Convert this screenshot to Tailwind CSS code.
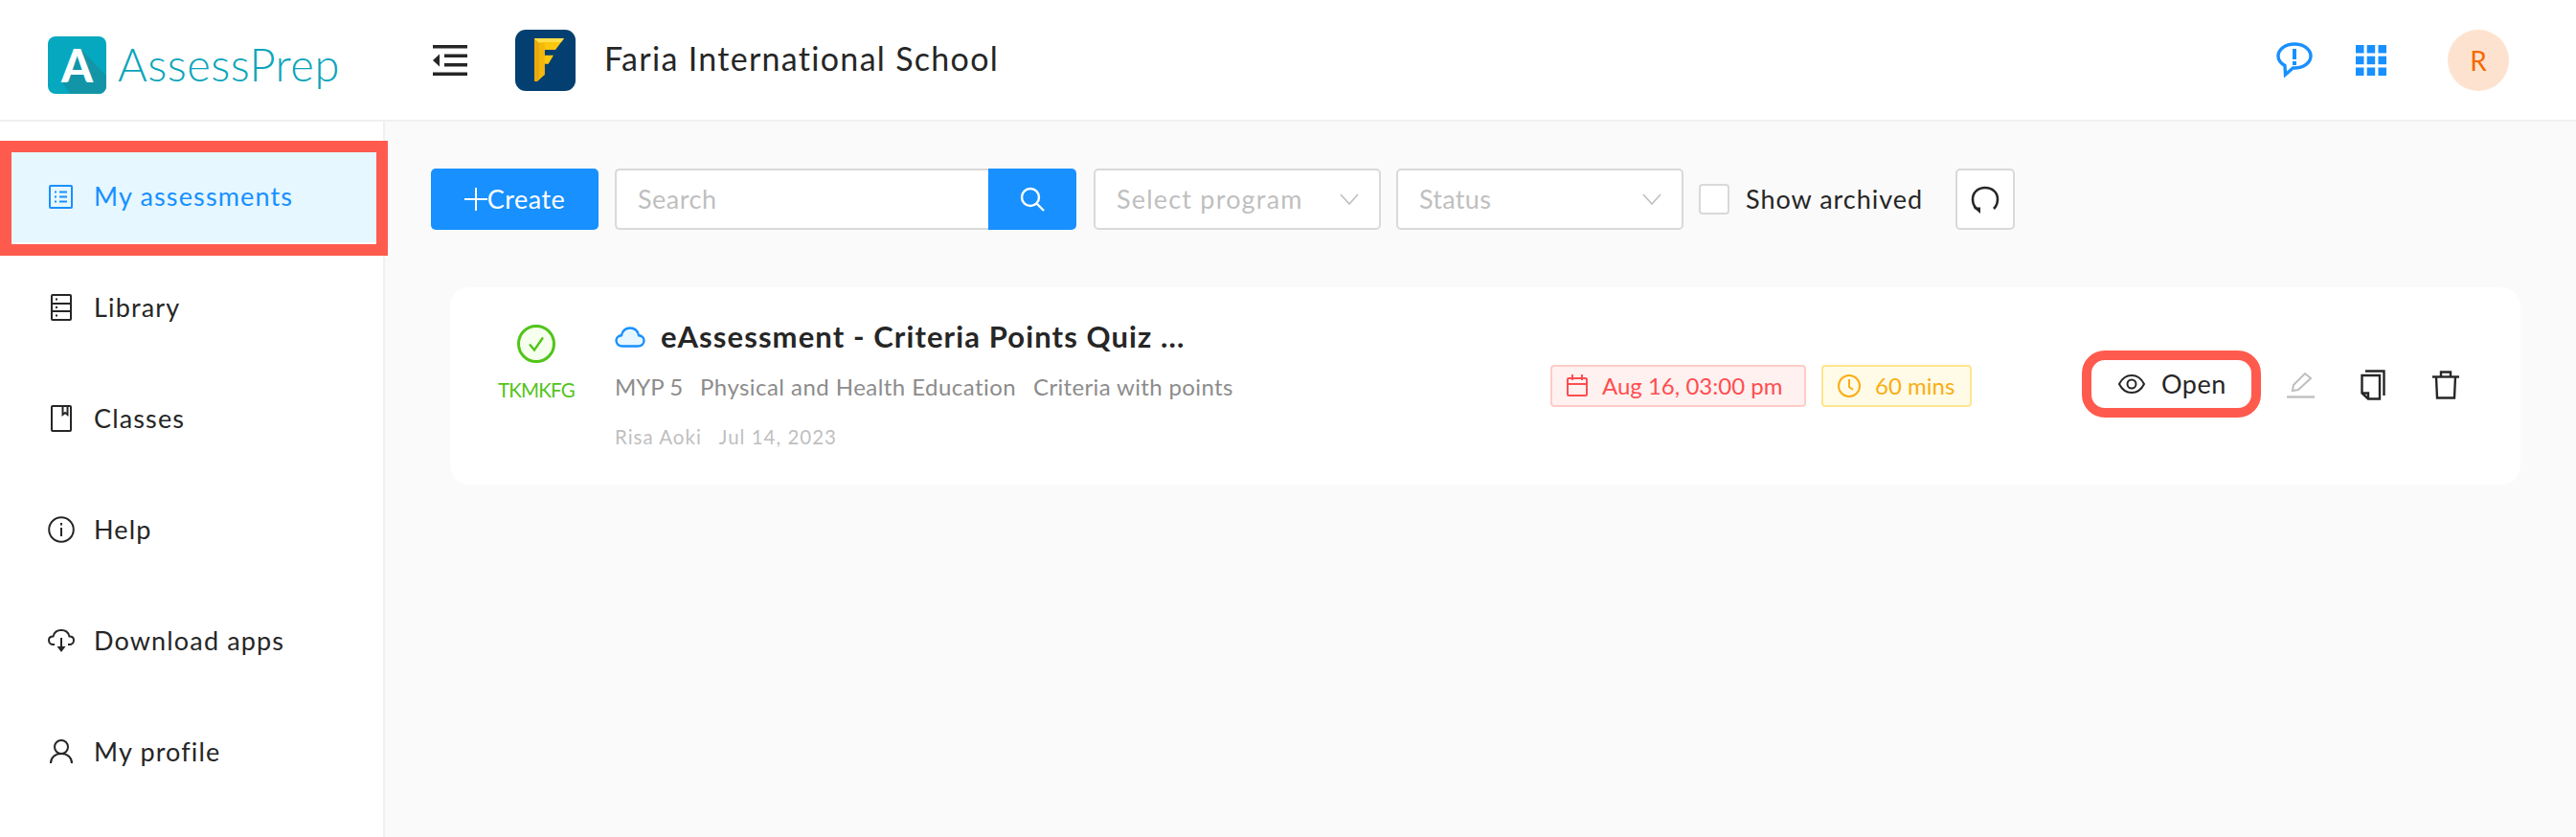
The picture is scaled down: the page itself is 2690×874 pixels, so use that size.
<!DOCTYPE html>
<html lang="en">
<head>
    <meta charset="UTF-8">
    <script src="https://cdn.jsdelivr.net/npm/@tailwindcss/browser@4"></script>
    <title>AssessPrep</title>
</head>
<body class="bg-white font-['Lato','Noto_Sans',sans-serif] text-[#262626]">
<div class="h-[874px] w-[2690px] overflow-hidden flex flex-col">
    <!-- header -->
    <header class="h-[127px] shrink-0 flex items-center border-b-2 border-[#f0f0f0] bg-white">
        <div class="w-[452px] shrink-0 pl-[50px] flex items-center gap-[12px] pt-[10px]">
            <svg class="w-[61px] h-[60px] shrink-0" viewBox="0 0 61 60">
                <rect width="61" height="60" rx="8" fill="#06a8bf"/>
                <path d="M35 14L61 41V52a8 8 0 0 1-8 8H23L15 48z" fill="#1395a8"/>
                <text x="30.500" y="48" text-anchor="middle" font-family="Lato" font-weight="900" font-size="47" fill="#fff">A</text>
            </svg>
            <span class="text-[47px] font-light tracking-[0.5px] leading-none text-[#0ba5ba]">AssessPrep</span>
        </div>
        <svg class="w-[36px] h-[32px] shrink-0" viewBox="0 0 36 32" fill="#262626">
            <rect width="36" height="3.5"/>
            <rect x="12" y="9.5" width="24" height="3.5"/>
            <rect x="12" y="19" width="24" height="3.5"/>
            <rect y="28.500" width="36" height="3.5"/>
            <path d="M0 16l7-6.500v13z"/>
        </svg>
        <div class="ml-[50px] w-[63px] h-[64px] rounded-[11px] bg-[#033f70] flex items-center justify-center shrink-0">
            <svg class="ml-[7px] w-[31px] h-[45px]" viewBox="0 0 31 45">
                <path d="M0 0H31L22 12H10.700V17.700H20L14.700 26.700H10.700V38L3 45H0Z" fill="#fdc60f"/>
                <path d="M0 0L5 5V42L3 45H0Z" fill="#e8a90c"/>
                <path d="M5 5H10.700V38L5 42Z" fill="#f5b70e"/>
                <path d="M0 0H31L28 4H4Z" fill="#ffe04a"/>
            </svg>
        </div>
        <span class="ml-[30px] mb-[3px] text-[34px] leading-none text-[#262626] tracking-[1.300px]">Faria International School</span>
        <div class="ml-auto flex items-center">
            <svg class="w-[38px] h-[38px]" viewBox="0 0 38 38">
                <path d="M19 2C9.500 2 2 7.500 2 14.500C2 18.500 4.500 22 9 24.500L9.500 34L17.500 27H19C28.500 27 36 21.500 36 14.500S28.500 2 19 2Z" fill="none" stroke="#1890ff" stroke-width="3.400"/>
                <rect x="17" y="7" width="4" height="11" fill="#1890ff"/>
                <rect x="17" y="20" width="4" height="4" fill="#1890ff"/>
            </svg>
            <svg class="ml-[45px] w-[32px] h-[32px]" viewBox="0 0 32 32" fill="#1890ff">
                <rect width="8.500" height="8.500"/><rect x="11.700" width="8.500" height="8.500"/><rect x="23.500" width="8.500" height="8.500"/>
                <rect y="11.700" width="8.500" height="8.500"/><rect x="11.700" y="11.700" width="8.500" height="8.500"/><rect x="23.500" y="11.700" width="8.500" height="8.500"/>
                <rect y="23.500" width="8.500" height="8.500"/><rect x="11.700" y="23.500" width="8.500" height="8.500"/><rect x="23.500" y="23.500" width="8.500" height="8.500"/>
            </svg>
            <div class="ml-[64px] mr-[70px] w-[64px] h-[64px] rounded-full bg-[#fde3cf] text-[#f56a00] text-[28px] flex items-center justify-center">R</div>
        </div>
    </header>

    <div class="flex-1 flex min-h-0">
        <!-- sidebar -->
        <aside class="w-[402px] shrink-0 border-r-2 border-[#f0f0f0] bg-white pt-[30px] text-[27px] tracking-[1.150px]">
            <nav class="flex flex-col gap-[20px]">
                <a class="relative h-[96px] flex items-center pl-[51px] gap-[22px] bg-[#e6f7ff] text-[#1890ff]">
                    <svg class="w-[25px] h-[25px] shrink-0" viewBox="0 0 25 25" fill="none" stroke="#1890ff" stroke-width="2">
                        <rect x="1" y="1" width="23" height="23" rx="1"/>
                        <path d="M11 7.500h8M11 12.500h8M11 17.500h8M6 7.500h2M6 12.500h2M6 17.500h2"/>
                    </svg>
                    My assessments
                    <span class="absolute left-0 -top-[10px] w-[405px] h-[120px] border-[12px] border-[#ff5a4e]"></span>
                </a>
                <a class="h-[96px] flex items-center pl-[53px] gap-[23px]">
                    <svg class="w-[22px] h-[28px] shrink-0" viewBox="0 0 22 28" fill="none" stroke="#262626" stroke-width="2">
                        <rect x="1" y="1" width="20" height="26" rx="1"/>
                        <path d="M1 10h20M1 18h20"/>
                        <path d="M5 5.500h2M5 14h2M5 22.500h2"/>
                    </svg>
                    Library
                </a>
                <a class="h-[96px] flex items-center pl-[53px] gap-[23px]">
                    <svg class="w-[22px] h-[28px] shrink-0" viewBox="0 0 22 28" fill="none" stroke="#262626" stroke-width="2">
                        <rect x="1" y="1" width="20" height="26" rx="1"/>
                        <path d="M12.500 1v9l2.500-2 2.500 2V1"/>
                    </svg>
                    Classes
                </a>
                <a class="h-[96px] flex items-center pl-[50px] gap-[20px]">
                    <svg class="w-[28px] h-[28px] shrink-0" viewBox="0 0 28 28" fill="none" stroke="#262626" stroke-width="2">
                        <circle cx="14" cy="14" r="12.800"/>
                        <path d="M14 12v9M14 7v2.500"/>
                    </svg>
                    Help
                </a>
                <a class="h-[96px] flex items-center pl-[50px] gap-[20px]">
                    <svg class="w-[28px] h-[24px] shrink-0" viewBox="0 0 28 24" fill="none" stroke="#262626" stroke-width="2">
                        <path d="M7 16H5.500C3 16 1 14 1 11.500S3 7.500 5.500 7.500C6.500 3.500 10 1 14 1S21.500 3.500 22.500 7.500C25 7.500 27 9 27 11.500S25 16 22.500 16H21"/>
                        <path d="M14 9v12"/>
                        <path d="M9.500 18h9L14 24z" fill="#262626" stroke="none"/>
                    </svg>
                    Download apps
                </a>
                <a class="h-[96px] flex items-center pl-[52px] gap-[22px]">
                    <svg class="w-[24px] h-[26px] shrink-0" viewBox="0 0 24 26" fill="none" stroke="#262626" stroke-width="2">
                        <circle cx="12" cy="8" r="7"/>
                        <path d="M1 25c0-6 4.500-10 11-10s11 4 11 10"/>
                    </svg>
                    My profile
                </a>
            </nav>
        </aside>

        <!-- content -->
        <main class="flex-1 bg-[#fafafa] pt-[49px] pl-[48px] pr-[58px]">
            <div class="flex items-center h-[64px] text-[27px]">
                <button class="w-[175px] h-[64px] rounded-[5px] bg-[#1890ff] text-white tracking-[0.500px] flex items-center justify-center">
                    <svg class="w-[24px] h-[24px]" viewBox="0 0 24 24" stroke="#fff" stroke-width="2"><path d="M12 0v24M0 12h24"/></svg>
                    Create
                </button>
                <div class="ml-[17px] flex h-[64px]">
                    <div class="w-[390px] bg-white border-2 border-r-0 border-[#d9d9d9] rounded-l-[5px] pl-[22px] flex items-center text-[#bfbfbf] tracking-[0.500px]">Search</div>
                    <div class="w-[92px] bg-[#1890ff] rounded-r-[5px] flex items-center justify-center">
                        <svg class="w-[26px] h-[26px]" viewBox="0 0 26 26" fill="none" stroke="#fff" stroke-width="2.400">
                            <circle cx="11" cy="11" r="9"/>
                            <path d="M17.500 17.500L25 25"/>
                        </svg>
                    </div>
                </div>
                <div class="ml-[18px] w-[300px] h-[64px] bg-white border-2 border-[#d9d9d9] rounded-[5px] pl-[22px] pr-[21px] flex items-center justify-between text-[#bfbfbf] tracking-[1.200px]">
                    Select program
                    <svg class="w-[20px] h-[12px]" viewBox="0 0 20 12" fill="none" stroke="#bfbfbf" stroke-width="1.600"><path d="M1 1l9 10 9-10"/></svg>
                </div>
                <div class="ml-[16px] w-[300px] h-[64px] bg-white border-2 border-[#d9d9d9] rounded-[5px] pl-[22px] pr-[21px] flex items-center justify-between text-[#bfbfbf] tracking-[0.300px]">
                    Status
                    <svg class="w-[20px] h-[12px]" viewBox="0 0 20 12" fill="none" stroke="#bfbfbf" stroke-width="1.600"><path d="M1 1l9 10 9-10"/></svg>
                </div>
                <div class="ml-[16px] w-[32px] h-[32px] bg-white border-2 border-[#d9d9d9] rounded-[4px]"></div>
                <span class="ml-[17px] tracking-[1px]">Show archived</span>
                <div class="ml-[34px] w-[62px] h-[64px] bg-white border-2 border-[#d9d9d9] rounded-[5px] flex items-center justify-center">
                    <svg class="w-[30px] h-[30px]" viewBox="0 0 30 30" fill="none" stroke="#262626" stroke-width="2.600">
                        <path d="M6 25C3.500 22.500 2 19 2 15C2 8 7.500 3 15 3S28 8 28 15C28 19 26.500 22.500 24 25"/>
                        <path d="M2.500 23.500h7.500v6.500z" fill="#262626" stroke="none"/>
                    </svg>
                </div>
            </div>

            <!-- assessment card -->
            <div class="ml-[20px] mt-[60px] h-[206px] rounded-[20px] bg-white flex items-center">
                <div class="self-start mt-[39px] ml-[40px] w-[100px] shrink-0 flex flex-col items-center">
                    <svg class="w-[40px] h-[40px]" viewBox="0 0 40 40">
                        <circle cx="20" cy="20" r="18.500" fill="#f6ffed" stroke="#52c41a" stroke-width="3"/>
                        <path d="M13 20.500l5 6 9-13" fill="none" stroke="#52c41a" stroke-width="2.400"/>
                    </svg>
                    <span class="mt-[14px] text-[20.500px] leading-[28px] tracking-[-0.800px] text-[#52c41a]">TKMKFG</span>
                </div>
                <div class="ml-[32px] w-[977px] shrink-0 -mt-[3px]">
                    <div class="h-[40px] flex items-center gap-[16px]">
                        <svg class="w-[32px] h-[22px] shrink-0" viewBox="0 0 32 22">
                            <path d="M8 20.500C4 20.500 1.500 18 1.500 14.500C1.500 11.500 4 9.500 7 9.200C8 4.500 11.500 1.500 16 1.500S24 4.500 25 9.200C28 9.500 30.500 11.500 30.500 14.500C30.500 18 28 20.500 24 20.500Z" fill="#e6f7ff" stroke="#1890ff" stroke-width="2.400"/>
                        </svg>
                        <span class="text-[31px] font-bold leading-none tracking-[1.100px]">eAssessment - Criteria Points Quiz ...</span>
                    </div>
                    <div class="mt-[12px] h-[40px] flex items-center gap-[18px] text-[24px] text-[#8c8c8c]">
                        <span>MYP 5</span>
                        <span class="tracking-[0.450px]">Physical and Health Education</span>
                        <span class="tracking-[0.350px]">Criteria with points</span>
                    </div>
                    <div class="mt-[18px] h-[30px] flex items-center gap-[18px] text-[20.500px] text-[#bfbfbf] tracking-[1px]">
                        <span>Risa Aoki</span>
                        <span>Jul 14, 2023</span>
                    </div>
                </div>
                <div class="h-[44px] w-[267px] shrink-0 rounded-[4px] border-2 border-[#ffccc7] bg-[#fff1f0] text-[#ff4d4f] text-[24px] flex items-center pl-[15px] gap-[15px]">
                    <svg class="w-[22px] h-[24px] shrink-0" viewBox="0 0 22 24" fill="none" stroke="#ff4d4f" stroke-width="2">
                        <rect x="1" y="4" width="20" height="18" rx="1"/>
                        <path d="M1 10h20M6 0v6M16 0v6"/>
                    </svg>
                    Aug 16, 03:00 pm
                </div>
                <div class="ml-[16px] h-[44px] w-[157px] shrink-0 rounded-[4px] border-2 border-[#ffe58f] bg-[#fffbe6] text-[#faad14] text-[24px] flex items-center pl-[15px] gap-[15px]">
                    <svg class="w-[24px] h-[24px] shrink-0" viewBox="0 0 24 24" fill="none" stroke="#faad14" stroke-width="2">
                        <circle cx="12" cy="12" r="11"/>
                        <path d="M12 5v8l4 3"/>
                    </svg>
                    60 mins
                </div>
                <button class="relative ml-[125px] mb-[4px] w-[167px] h-[50px] shrink-0 flex items-center pl-[28px] gap-[17px] text-[27px] tracking-[0.500px]">
                    <svg class="w-[28px] h-[20px] shrink-0" viewBox="0 0 28 20" fill="none" stroke="#262626" stroke-width="2">
                        <path d="M1 10C4 4 8.500 1 14 1S24 4 27 10C24 16 19.500 19 14 19S4 16 1 10Z"/>
                        <circle cx="14" cy="10" r="4.500"/>
                    </svg>
                    Open
                    <span class="absolute -inset-[10px] border-[10px] border-[#ff5a4e] rounded-[24px]"></span>
                </button>
                <svg class="ml-[37px] mb-[2px] w-[29px] h-[28px] shrink-0" viewBox="0 0 29 28" fill="none" stroke="#bfbfbf" stroke-width="2">
                    <path d="M6 20L7 14L19 2L25 7L12 19Z"/>
                    <path d="M0 26.500H29" stroke-width="2.400"/>
                </svg>
                <svg class="ml-[48px] mb-[2px] w-[26px] h-[32px] shrink-0" viewBox="0 0 26 32" fill="none" stroke="#262626" stroke-width="2.400">
                    <path d="M5 1.500H24.500V27"/>
                    <path d="M1.500 6H20V30.500H8L1.500 24.500Z"/>
                    <path d="M1.500 24.500H8V30.500"/>
                </svg>
                <svg class="ml-[49px] mb-[2px] w-[28px] h-[30px] shrink-0" viewBox="0 0 28 30" fill="none" stroke="#262626" stroke-width="2.400">
                    <path d="M0 6.500H28"/>
                    <path d="M9 6V1.500H19V6"/>
                    <path d="M4 6.500L5 28.500H23L24 6.500"/>
                </svg>
            </div>
        </main>
    </div>
</div>
</body>
</html>
